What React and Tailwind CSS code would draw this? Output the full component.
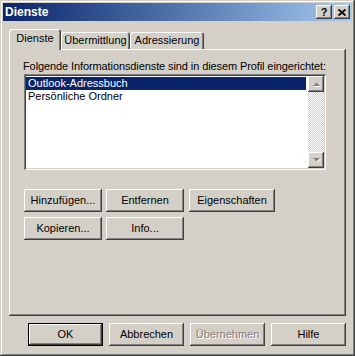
// App.jsx
// Windows 2000 style "Dienste" property sheet

const raised =
  'shadow-[inset_-1px_-1px_#404040,inset_1px_1px_#ffffff,inset_-2px_-2px_#808080,inset_2px_2px_#d4d0c8]'

function Button({ children, className = '', disabled = false, isDefault = false }) {
  if (isDefault) {
    return (
      <div className={`h-[23px] border border-black ${className}`}>
        <div className={`h-full flex items-center justify-center ${raised}`}>{children}</div>
      </div>
    )
  }
  return (
    <div
      className={`h-[23px] flex items-center justify-center ${raised} ${
        disabled ? 'text-[#808080] [text-shadow:1px_1px_0_#ffffff]' : ''
      } ${className}`}
    >
      {children}
    </div>
  )
}

function ScrollArrow({ up }) {
  return (
    <div className={`w-[16px] h-[16px] bg-[#d4d0c8] flex items-center justify-center ${raised}`}>
      <svg width="9" height="6" viewBox="0 0 9 6">
        {up ? (
          <>
            <path d="M2 6 L9 6 L5.5 2.5 Z" fill="#ffffff" />
            <path d="M1 5 L8 5 L4.5 1.5 Z" fill="#808080" />
          </>
        ) : (
          <>
            <path d="M2 2 L9 2 L5.5 5.5 Z" fill="#ffffff" />
            <path d="M1 1 L8 1 L4.5 4.5 Z" fill="#808080" />
          </>
        )}
      </svg>
    </div>
  )
}

export default function App() {
  return (
    <div className="w-[355px] h-[356px] bg-[#d4d0c8] p-[3px] flex flex-col text-[11px] leading-[13px] text-black font-['Liberation_Sans',Arial,sans-serif] shadow-[inset_-1px_-1px_#404040,inset_1px_1px_#d4d0c8,inset_-2px_-2px_#808080,inset_2px_2px_#ffffff]">
      {/* Title bar */}
      <div className="h-[18px] flex items-center justify-between pl-[2px] pr-[2px] bg-gradient-to-r from-[#0a246a] to-[#a6caf0]">
        <span className="font-bold text-white text-[12px] leading-[14px]">Dienste</span>
        <div className="flex gap-[2px]">
          <div className={`w-[16px] h-[14px] bg-[#d4d0c8] flex items-center justify-center font-bold text-[11px] leading-none ${raised}`}>
            ?
          </div>
          <div className={`w-[16px] h-[14px] bg-[#d4d0c8] flex items-center justify-center ${raised}`}>
            <svg width="8" height="7" viewBox="0 0 8 7">
              <path d="M0.5 0.5 L7.5 6.5 M7.5 0.5 L0.5 6.5" stroke="#000" strokeWidth="1.8" />
            </svg>
          </div>
        </div>
      </div>

      {/* Body */}
      <div className="flex-1 flex flex-col px-[6px] pt-[8px]">
        {/* Tabs */}
        <div className="h-[20px] flex items-end relative z-10">
          <div className="w-[52px] h-[21px] -mb-px bg-[#d4d0c8] rounded-t-[3px] flex justify-center pt-[3px] shadow-[inset_1px_1px_#ffffff,inset_-1px_0_#404040,inset_-2px_0_#808080]">
            Dienste
          </div>
          <div className="w-[69px] h-[17px] rounded-t-[3px] flex justify-center pt-[2px] shadow-[inset_1px_1px_#ffffff,inset_-1px_0_#404040,inset_-2px_0_#808080]">
            Übermittlung
          </div>
          <div className="w-[74px] h-[17px] rounded-t-[3px] flex justify-center pt-[2px] shadow-[inset_1px_1px_#ffffff,inset_-1px_0_#404040,inset_-2px_0_#808080]">
            Adressierung
          </div>
        </div>

        {/* Panel */}
        <div className="w-[337px] h-[267px] pl-[14px] pt-[11px] flex flex-col shadow-[inset_-1px_-1px_#404040,inset_1px_1px_#ffffff,inset_-2px_-2px_#808080]">
          <div className="h-[13px] tracking-[-0.1px]">Folgende Informationsdienste sind in diesem Profil eingerichtet:</div>
          <div className="mt-[1px] ml-[1px] w-[302px] h-[96px] bg-white p-[2px] flex shadow-[inset_1px_1px_#808080,inset_-1px_-1px_#ffffff,inset_2px_2px_#404040,inset_-2px_-2px_#d4d0c8]">
            <div className="flex-1 pt-[1px]">
              <div className="h-[13px] mr-[2px] bg-[#0a246a] text-white pl-[2px]">Outlook-Adressbuch</div>
              <div className="h-[13px] pl-[2px]">Persönliche Ordner</div>
            </div>
            <div className="w-[16px] flex flex-col">
              <ScrollArrow up />
              <div className="flex-1 bg-[repeating-conic-gradient(#d4d0c8_0%_25%,#ffffff_0%_50%)] bg-[length:2px_2px]" />
              <ScrollArrow />
            </div>
          </div>

          <div className="mt-[19px] ml-[1px] flex gap-[4px]">
            <Button className="w-[78px]">Hinzufügen...</Button>
            <Button className="w-[78px]">Entfernen</Button>
            <Button className="w-[86px] ml-[1px]">Eigenschaften</Button>
          </div>
          <div className="mt-[5px] ml-[1px] flex gap-[4px]">
            <Button className="w-[78px]">Kopieren...</Button>
            <Button className="w-[78px]">Info...</Button>
          </div>
        </div>

        {/* Dialog buttons */}
        <div className="mt-[7px] flex justify-end gap-[6px] w-[337px]">
          <Button isDefault className="w-[75px]">OK</Button>
          <Button className="w-[75px]">Abbrechen</Button>
          <Button disabled className="w-[75px]">Übernehmen</Button>
          <Button className="w-[75px]">Hilfe</Button>
        </div>
      </div>
    </div>
  )
}
